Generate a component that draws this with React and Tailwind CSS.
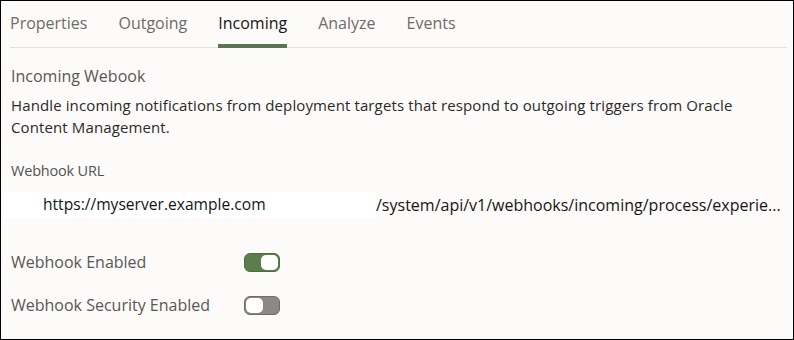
export default function App() {
  const tabs = ["Properties", "Outgoing", "Incoming", "Analyze", "Events"];
  return (
    <div className="w-[794px] h-[340px] bg-[#fcfbf9] border border-black overflow-hidden" style={{ fontFamily: '"Open Sans", "Noto Sans", sans-serif' }}>
      <div className="ml-[9px] mr-[6px] border-b border-[#e3e1dd] flex gap-[31px] h-[47px]">
        {tabs.map((t) => (
          <div key={t} className={`relative pt-[11px] text-[16px] leading-[22px] ${t === "Incoming" ? "text-[#161513]" : "text-[#6f6c68]"}`}>
            {t}
            {t === "Incoming" && <div className="absolute left-0 right-0 bottom-[-1px] h-[4px] bg-[#5b7352]" />}
          </div>
        ))}
      </div>
      <div className="pl-[10px] pr-[8px]">
        <div className="mt-[18px] text-[16px] leading-[20px] text-[#5a5753]">Incoming Webook</div>
        <div className="mt-[8px] text-[15px] leading-[22px] text-[#2b2a28] tracking-[0.12px]">
          Handle incoming notifications from deployment targets that respond to outgoing triggers from Oracle Content Management.
        </div>
        <div className="mt-[23px] text-[14.5px] leading-[20px] text-[#55524e] tracking-[-0.2px]">Webhook URL</div>
        <div className="mt-[11px] flex items-center h-[26px] text-[15.6px] text-[#161513] -ml-[9px]">
          <div className="bg-white h-[26px] w-[374px] flex items-center pl-[41px]">https://myserver.example.com</div>
          <div className="whitespace-nowrap overflow-hidden text-ellipsis text-[16px]">/system/api/v1/webhooks/incoming/process/experie...</div>
        </div>
        <div className="mt-[33px] flex items-center h-[22px]">
          <div className="w-[233px] text-[16px] text-[#5a5753]">Webhook Enabled</div>
          <div className="w-[36px] h-[19px] rounded-[6px] bg-[#5d7d4d] border border-[#4f6b42] flex items-center justify-end pr-[1px]">
            <div className="w-[17px] h-[15px] rounded-[5px] bg-white" />
          </div>
        </div>
        <div className="mt-[21px] flex items-center h-[22px]">
          <div className="w-[233px] text-[16px] text-[#5a5753]">Webhook Security Enabled</div>
          <div className="w-[36px] h-[19px] rounded-[6px] bg-[#8c8883] border border-[#6f6b66] flex items-center justify-start pl-[1px]">
            <div className="w-[17px] h-[15px] rounded-[5px] bg-white" />
          </div>
        </div>
      </div>
    </div>
  );
}
